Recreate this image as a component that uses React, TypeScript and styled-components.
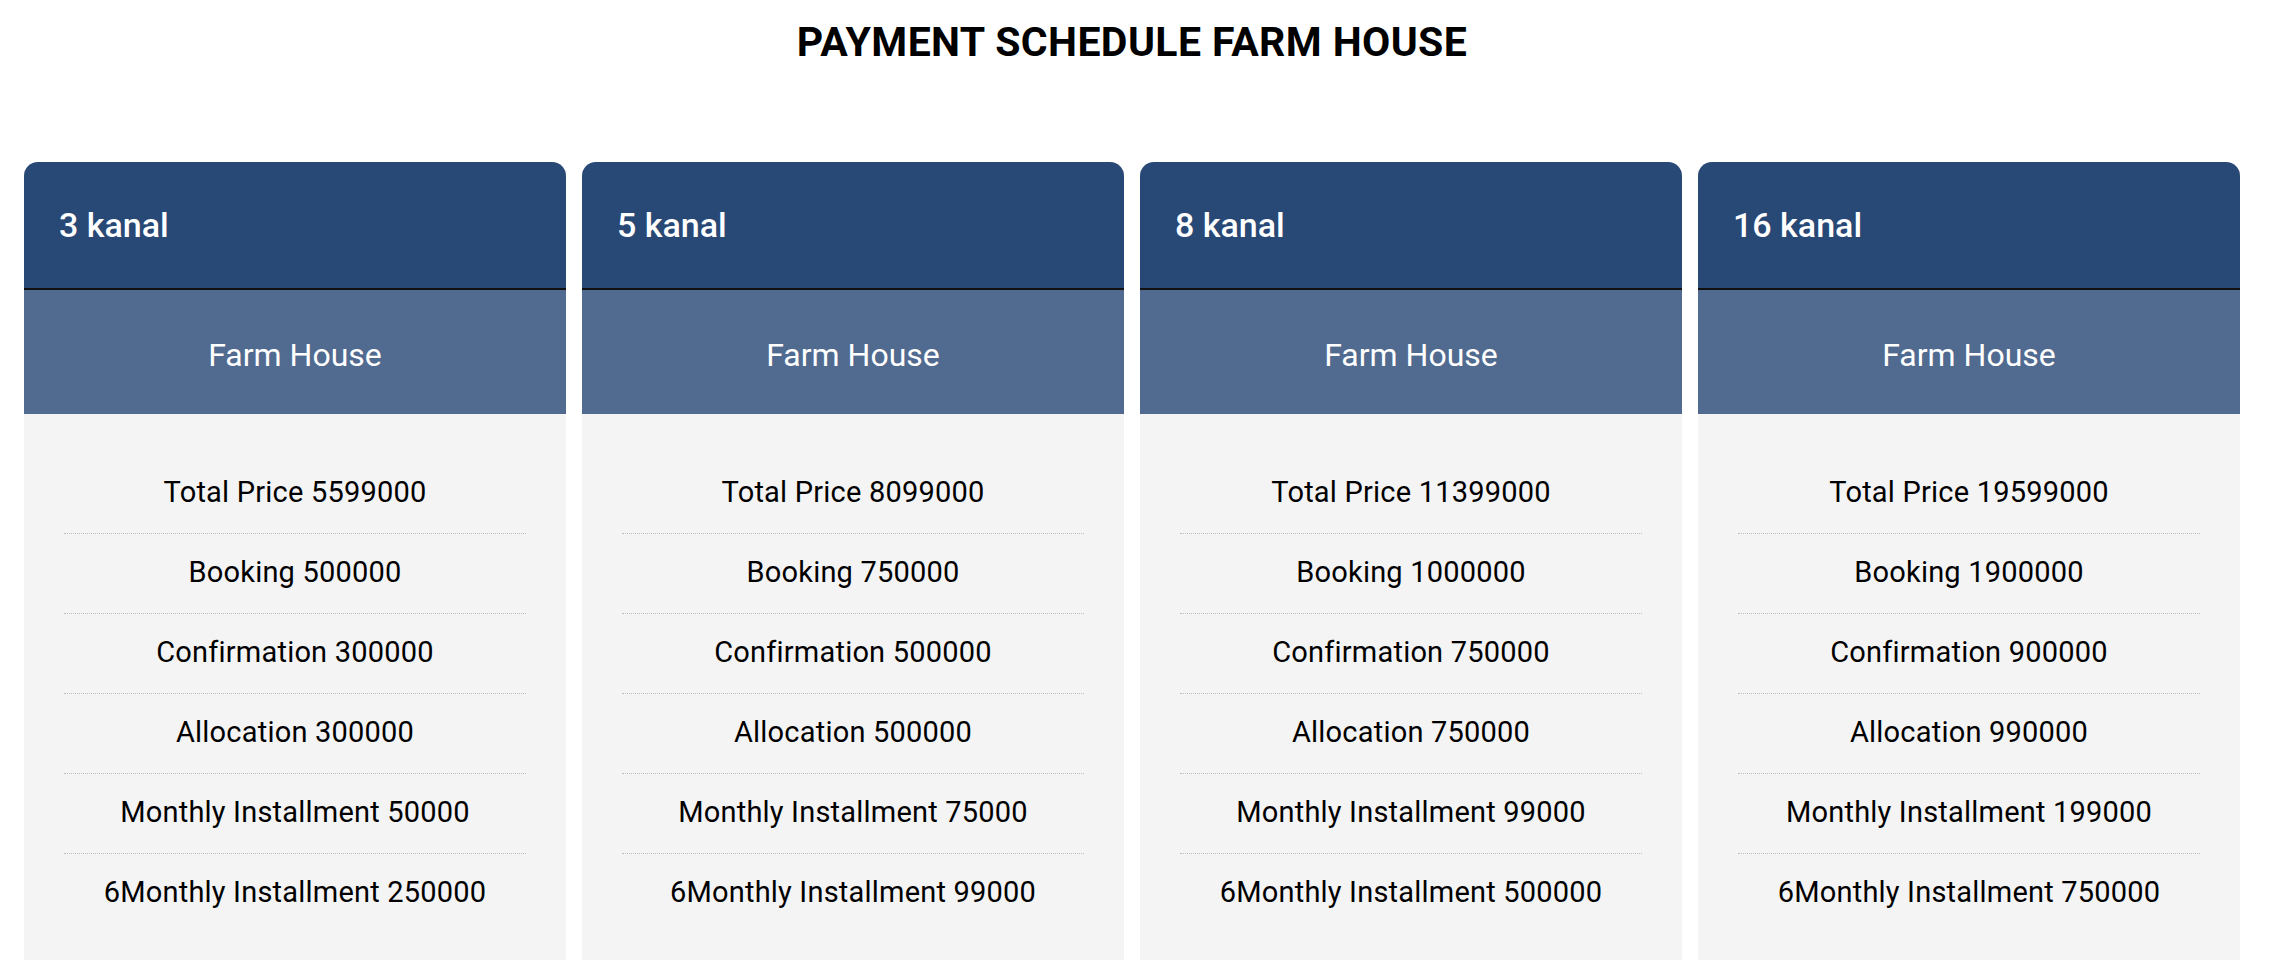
import React from 'react';
import styled, { createGlobalStyle } from 'styled-components';

const GlobalStyle = createGlobalStyle`
  body {
    margin: 0;
    background: #ffffff;
    font-family: Roboto, "Liberation Sans", Arial, sans-serif;
    color: #000;
  }
`;

const Page = styled.div`
  padding: 18px 48px 0 24px;
`;

const Title = styled.h2`
  margin: 0 0 96px;
  font-size: 41px;
  line-height: 48px;
  font-weight: 700;
  letter-spacing: 0.4px;
  text-align: center;
  color: #000;
`;

const Grid = styled.div`
  display: grid;
  grid-template-columns: repeat(4, 1fr);
  gap: 16px;
`;

const Card = styled.div`
  border-radius: 14px 14px 0 0;
  overflow: hidden;
  background: #f4f4f4;
`;

const CardHeader = styled.div`
  height: 126px;
  display: flex;
  align-items: center;
  padding: 0 35px;
  background: #284876;
  border-bottom: 2px solid #111;
  color: #fff;
  font-size: 34px;
  line-height: 40px;
  font-weight: 500;
`;

const SubHeader = styled.div`
  padding: 45px 20px 39px;
  background: #516a90;
  color: #fff;
  text-align: center;
  font-size: 32px;
  line-height: 40px;
  font-weight: 400;
`;

const Body = styled.ul`
  list-style: none;
  margin: 0;
  padding: 40px 40px 40px;
`;

const Row = styled.li`
  padding: 20px 0 23px;
  font-size: 29px;
  line-height: 36px;
  letter-spacing: 0.2px;
  text-align: center;
  color: #000;
  border-bottom: 1px dotted #bdbdbd;
  &:last-child {
    border-bottom: none;
  }
`;

interface Plan {
  size: string;
  rows: [string, string][];
}

const plans: Plan[] = [
  {
    size: '3 kanal',
    rows: [
      ['Total Price', '5599000'],
      ['Booking', '500000'],
      ['Confirmation', '300000'],
      ['Allocation', '300000'],
      ['Monthly Installment', '50000'],
      ['6Monthly Installment', '250000'],
    ],
  },
  {
    size: '5 kanal',
    rows: [
      ['Total Price', '8099000'],
      ['Booking', '750000'],
      ['Confirmation', '500000'],
      ['Allocation', '500000'],
      ['Monthly Installment', '75000'],
      ['6Monthly Installment', '99000'],
    ],
  },
  {
    size: '8 kanal',
    rows: [
      ['Total Price', '11399000'],
      ['Booking', '1000000'],
      ['Confirmation', '750000'],
      ['Allocation', '750000'],
      ['Monthly Installment', '99000'],
      ['6Monthly Installment', '500000'],
    ],
  },
  {
    size: '16 kanal',
    rows: [
      ['Total Price', '19599000'],
      ['Booking', '1900000'],
      ['Confirmation', '900000'],
      ['Allocation', '990000'],
      ['Monthly Installment', '199000'],
      ['6Monthly Installment', '750000'],
    ],
  },
];

const App: React.FC = () => {
  return (
    <>
      <GlobalStyle />
      <Page>
        <Title>PAYMENT SCHEDULE FARM HOUSE</Title>
        <Grid>
          {plans.map(plan => (
            <Card key={plan.size}>
              <CardHeader>{plan.size}</CardHeader>
              <SubHeader>Farm House</SubHeader>
              <Body>
                {plan.rows.map(([label, value]) => (
                  <Row key={label}>{label} {value}</Row>
                ))}
              </Body>
            </Card>
          ))}
        </Grid>
      </Page>
    </>
  );
};

export default App;
